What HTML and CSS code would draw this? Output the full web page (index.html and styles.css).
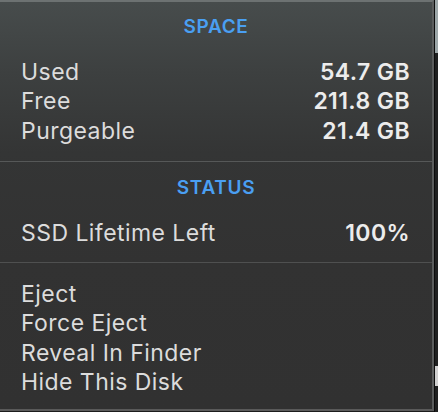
FILE: index.html
```html
<!DOCTYPE html>
<html>
<head>
<meta charset="utf-8">
<link rel="stylesheet" href="styles.css">
</head>
<body>
<div class="screen">
  <div class="popup">
    <section class="section first">
      <div class="header">SPACE</div>
      <div class="row"><span class="label">Used</span><span class="value">54.7 GB</span></div>
      <div class="row"><span class="label">Free</span><span class="value">211.8 GB</span></div>
      <div class="row"><span class="label">Purgeable</span><span class="value">21.4 GB</span></div>
    </section>
    <section class="section second">
      <div class="header">STATUS</div>
      <div class="row"><span class="label">SSD Lifetime Left</span><span class="value">100%</span></div>
    </section>
    <section class="section actions">
      <div class="row"><span class="label">Eject</span></div>
      <div class="row"><span class="label">Force Eject</span></div>
      <div class="row"><span class="label">Reveal In Finder</span></div>
      <div class="row"><span class="label">Hide This Disk</span></div>
    </section>
  </div>
  <div class="edge">
    <div class="edge-top"></div>
    <div class="edge-mark"></div>
  </div>
</div>
</body>
</html>
```
FILE: styles.css
```css
html, body {
  margin: 0;
  padding: 0;
  background: #1c1c1c;
  width: 438px;
  height: 412px;
  overflow: hidden;
}
.screen {
  display: flex;
  height: 412px;
}
.popup {
  width: 432px;
  height: 407px;
  border-top: 2px solid #6d7272;
  border-right: 2px solid #5a5c5c;
  border-bottom: 2px solid #5a5a5a;
  background: linear-gradient(180deg, #474c4c 0px, #3d4040 70px, #343535 150px, #323232 260px, #313131 407px);
  font-family: "Inter", "Liberation Sans", sans-serif;
  color: #dedede;
  display: flex;
  flex-direction: column;
}
.section {
  display: flex;
  flex-direction: column;
}
.section.first {
  padding: 13px 0 14.5px;
  border-bottom: 1px solid #565858;
}
.section.second {
  padding: 14.5px 0 13.5px;
  border-bottom: 1px solid #4f5050;
}
.section.actions {
  padding: 17px 0 0;
}
.header {
  text-align: center;
  color: #4a9ff2;
  font-size: 19px;
  font-weight: 600;
  letter-spacing: 0.7px;
  line-height: 24px;
  margin-bottom: 18.5px;
}
.row {
  display: flex;
  justify-content: space-between;
  align-items: center;
  padding: 0 22px 0 21px;
  height: 29.5px;
  font-size: 23px;
  line-height: 29.5px;
}
.label {
  color: #dcdcdc;
  letter-spacing: 0.45px;
}
.value {
  color: #ececec;
  font-weight: 600;
  letter-spacing: 0.4px;
}
.edge {
  width: 3px;
  border-left: 1px solid #0c0c0c;
  background: #1f2020;
  display: flex;
  flex-direction: column;
}
.edge-top {
  height: 53px;
  background: #9ca6a8;
}
.edge-mark {
  margin-top: 313px;
  height: 20px;
  background: #d0d0d0;
}
```
